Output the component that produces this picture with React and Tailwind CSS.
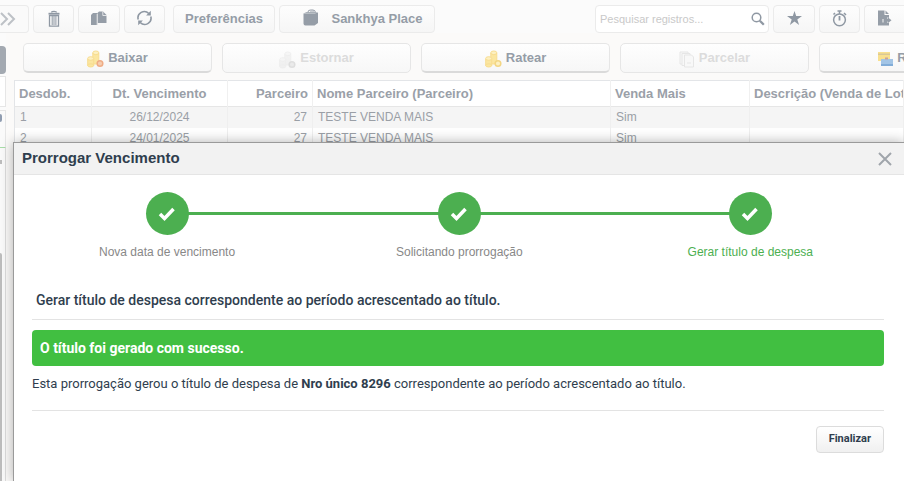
import React, { Fragment } from 'react';
import { clsx } from 'clsx';

const CoinsIcon = ({ muted, badge }) => (
  <svg width="17" height="18" viewBox="0 0 17 18" className={clsx('mt-[3px]', muted && 'grayscale opacity-40')}>
    <g fill="#fbe6a0" stroke="#f8dd90" strokeWidth="1">
      <path d="M5.800 3v11h6V3z" />
      <ellipse cx="8.800" cy="2.800" rx="3" ry="1.800" fill="#fdf0c2" />
      <path d="M.700 9v6.500h6V9z" />
      <ellipse cx="3.700" cy="8.500" rx="3" ry="1.800" fill="#fdf0c2" />
      <ellipse cx="3.700" cy="15.400" rx="3" ry="1.600" />
    </g>
    <circle cx="13" cy="13.500" r="2.800" fill={badge === 'gold' ? '#fdf0c2' : '#f6cdb0'} stroke={badge === 'gold' ? '#f3d684' : '#efac85'} strokeWidth="1.500" />
  </svg>
);

const SheetsIcon = () => (
  <svg width="16" height="17" viewBox="0 0 16 17" fill="#f8f8f8" stroke="#e6e6e6" className="mt-[3px]">
    <path d="M1 1h8v12H1z" />
    <path d="M3 2.500h8v12H3z" />
    <path d="M5.500 4h7l2 2v10h-9z" />
    <path d="M8 12h4" />
  </svg>
);

const CardsIcon = () => (
  <svg width="15" height="16" viewBox="0 0 15 16" className="mt-[2px]">
    <path fill="#f9e08e" d="M0 1h12v9H0z" />
    <path fill="#d9c896" d="M0 2.500h12v1.500H0z" />
    <path fill="#a3c5e6" d="M3 8h12v7H3z" />
    <path fill="#c9a39a" d="M7 6.500h3v2H7z" />
    <path fill="#82add8" d="M3 13h12v2H3z" />
  </svg>
);

const TrashIcon = () => (
  <svg width="12" height="17" viewBox="0 0 12 17" fill="none" stroke="#8f98a3">
    <path d="M3.500 2.500c0-1.500 5-1.500 5 0" strokeWidth="1.200" />
    <path d="M.500 3.700h11" strokeWidth="1.800" />
    <path d="M1.500 5.500v10.700h9V5.500z" strokeWidth="1.300" />
    <path d="M4.200 6v9M6 6v9M7.900 6v9" />
  </svg>
);

const CopyIcon = () => (
  <svg width="16" height="15" viewBox="0 0 16 15" fill="#959da7">
    <path d="M2 2h4.500v12H0V4z" />
    <path d="M8 .500h4L15.500 4v8H6.500V2z" />
    <path d="M6.200 3v11M11.800.500v4h4" fill="none" stroke="#f6f6f6" strokeWidth=".8" />
  </svg>
);

const RefreshIcon = () => (
  <svg width="15" height="16" viewBox="0 0 15 16" fill="none" stroke="#8f98a3" strokeWidth="1.600">
    <path d="M1.200 9.500A6.300 6.300 0 0 1 11.800 3.500M13.800 6.500A6.300 6.300 0 0 1 3.200 12.500" />
    <path d="M13.800.800v4.700H9.100zM1.200 15.200v-4.700h4.700z" fill="#8f98a3" stroke="none" />
  </svg>
);

const BagIcon = () => (
  <svg width="16" height="17" viewBox="0 0 16 17" className="mb-1">
    <path d="M5 4V3Q5 1 7.500 1H10q2.500 0 2.500 3M8 3.500V1.500M10 3.500V1.500" fill="none" stroke="#959da7" />
    <path d="M.500 4.500h11v12H2.500q-2 0-2-2zM11.500 4.500l3.500-1V14l-3.500 2.500z" fill="#959da7" />
    <path d="M.500 4.500 3.500 3H15l-3.500 1.500z" fill="#a8afb7" />
  </svg>
);

const SearchIcon = () => (
  <svg width="14" height="14" viewBox="0 0 14 14" fill="none" stroke="#8f98a3">
    <circle cx="5.500" cy="5.500" r="4.300" strokeWidth="1.500" />
    <path d="m8.800 8.800 4 4" strokeWidth="2.300" />
  </svg>
);

const StarIcon = () => (
  <svg width="15" height="14" viewBox="0 0 15 14" fill="#8f98a3">
    <path d="m7.500 0 1.700 5.100H15l-4.700 3.300 1.800 5.500-4.600-3.400-4.600 3.400 1.800-5.500L0 5.100h5.800z" />
  </svg>
);

const TimerIcon = () => (
  <svg width="15" height="17" viewBox="0 0 15 17" fill="none" stroke="#8f98a3">
    <circle cx="7.500" cy="9.800" r="5.900" strokeWidth="1.500" />
    <path d="M5.500 1h4M7.500 1v3M12 3l2 2M3 3 1.500 4.500" strokeWidth="1.500" />
    <path d="M7.500 6v4.500" strokeWidth="1.800" />
  </svg>
);

const ExportIcon = () => (
  <svg width="15" height="16" viewBox="0 0 15 16" fill="#959da7">
    <path d="M1 .500h6.500v4.500H12v3L10 7v6h2v2.500H1z" />
    <path d="M8.500.500 12 4H8.500zM10.500 7l4 3.200-4 3.200v-2H7V9h3.500z" />
    <path d="M6 9v3.500" stroke="#f5f5f5" />
  </svg>
);

const ToolButton = ({ label, className, children }) => (
  <button
    type="button"
    aria-label={label}
    className={clsx(
      'flex h-7 shrink-0 items-center justify-center rounded-sm border border-[#ebebeb] bg-linear-to-b from-[#fdfdfd] to-[#f6f6f6] text-[13px] font-bold text-[#959da7]',
      label && 'pb-[2px]',
      className
    )}
  >
    {children}
  </button>
);

const actions = [
  { label: 'Baixar', icon: <CoinsIcon /> },
  { label: 'Estornar', icon: <CoinsIcon muted />, disabled: true },
  { label: 'Ratear', icon: <CoinsIcon badge="gold" /> },
  { label: 'Parcelar', icon: <SheetsIcon />, disabled: true },
  { label: 'Receber', icon: <CardsIcon /> },
];

const rows = [
  { id: 1, date: '26/12/2024', partner: 27, name: 'TESTE VENDA MAIS', sale: 'Sim' },
  { id: 2, date: '24/01/2025', partner: 27, name: 'TESTE VENDA MAIS', sale: 'Sim' },
];

const steps = ['Nova data de vencimento', 'Solicitando prorrogação', 'Gerar título de despesa'];

const Toolbar = () => (
  <div className="flex gap-1 pt-[5px]">
    <button type="button" aria-label="Avançar" className="flex h-7 w-[29px] shrink-0 items-center rounded-r-sm border border-l-0 border-[#ebebeb] bg-[#fafafa]">
      <svg width="16" height="14" viewBox="0 0 16 14" fill="none" stroke="#bdc1c6" strokeWidth="2">
        <path d="m1 1 6 6-6 6M8 1l6 6-6 6" />
      </svg>
    </button>
    <ToolButton label="Excluir" className="w-[41px]"><TrashIcon /></ToolButton>
    <ToolButton label="Duplicar" className="w-[42px]"><CopyIcon /></ToolButton>
    <ToolButton label="Atualizar" className="w-[41px]"><RefreshIcon /></ToolButton>
    <ToolButton className="ml-1 w-[102px]">Preferências</ToolButton>
    <ToolButton className="w-[156px] gap-3 pl-3"><BagIcon />Sankhya Place</ToolButton>
    <label className="ml-auto flex h-7 w-[174px] shrink-0 items-center rounded-sm border border-[#ebebeb] bg-white pr-[3px] pl-1">
      <input
        type="text"
        aria-label="Pesquisar registros"
        placeholder="Pesquisar registros..."
        className="min-w-0 flex-1 text-[11px] outline-none placeholder:text-[#c9c9c9]"
      />
      <SearchIcon />
    </label>
    <ToolButton label="Favoritos" className="w-[42px]"><StarIcon /></ToolButton>
    <ToolButton label="Temporizador" className="w-[41px]"><TimerIcon /></ToolButton>
    <ToolButton label="Exportar" className="w-10 rounded-r-none border-r-0"><ExportIcon /></ToolButton>
  </div>
);

const SideStrip = () => (
  <div className="flex w-[6px] shrink-0 flex-col">
    <div className="mt-[13px] h-7 rounded-r-sm bg-[#a3a9b1]" />
    <div className="mt-[2px] h-[31px] border border-l-0 border-[#e6e6e6] bg-white" />
    <div className="mt-[3px] h-[38px] border border-l-0 border-[#e6e6e6] border-b-[#a8dda8] bg-[#fafafa] pt-[3px]">
      <div className="h-2 w-[2px] rounded-r-full bg-[#8f9cb0]" />
    </div>
    <div className="flex-1 border-r border-[#dcdcdc] bg-[#fafafa] pt-3">
      <div className="h-1 w-[2px] bg-[#bdbdbd]" />
      <div className="mt-[89px] h-full w-[2px] rounded-tr-sm bg-[#bdbdbd]" />
    </div>
  </div>
);

const TitlesTable = () => (
  <table className="w-full min-w-[890px] table-fixed border-collapse border border-[#e3e5e8] bg-white text-[12px] text-[#9a9fa6]">
    <colgroup>
      <col className="w-[77px]" />
      <col className="w-[136px]" />
      <col className="w-[85px]" />
      <col className="w-[298px]" />
      <col className="w-[139px]" />
      <col />
    </colgroup>
    <thead>
      <tr className="h-[26px] border-b border-[#e6e6e6] text-left text-[13px] text-[#9aa0a8] *:border-r *:border-[#f0f0f0] *:px-1 *:py-0 *:whitespace-nowrap">
        <th>Desdob.</th>
        <th className="text-center">Dt. Vencimento</th>
        <th className="text-right">Parceiro</th>
        <th>Nome Parceiro (Parceiro)</th>
        <th>Venda Mais</th>
        <th className="overflow-hidden">Descrição (Venda de Lote)</th>
      </tr>
    </thead>
    <tbody>
      {rows.map((row) => (
        <tr key={row.id} className="h-[21px] odd:bg-[#f5f5f5] *:border-r *:border-[#efefef] *:px-[5px] *:py-0">
          <td>{row.id}</td>
          <td className="text-center">{row.date}</td>
          <td className="text-right">{row.partner}</td>
          <td>{row.name}</td>
          <td>{row.sale}</td>
          <td />
        </tr>
      ))}
    </tbody>
  </table>
);

const Stepper = () => (
  <ol className="flex justify-between pr-[71px] pl-[67px]">
    {steps.map((step, i) => (
      <Fragment key={step}>
        {i > 0 && <li aria-hidden="true" className={clsx('mt-5 h-[3px] flex-1 bg-[#4caf50]', i === 1 ? '-mx-12' : '-mx-[46px]')} />}
        <li className={clsx('flex shrink-0 flex-col items-center text-[12px]', i === 2 ? 'text-[#4caf50]' : 'text-[#888888]')}>
          <span className="flex size-[43px] items-center justify-center rounded-full bg-[#4caf50]">
            <svg width="18" height="16" viewBox="0 0 18 16" fill="none" stroke="#fff" strokeWidth="3.500">
              <path d="m2 8 4.500 4.500L15.500 3" />
            </svg>
          </span>
          <span className="mt-2 leading-[18px]">{step}</span>
        </li>
      </Fragment>
    ))}
  </ol>
);

const ExtendDueDateModal = () => (
  <section
    role="dialog"
    aria-labelledby="modal-title"
    className="absolute top-[142px] right-0 bottom-0 left-[13px] border-t border-l border-[#9a9a9a] bg-white text-[#2f3e4e] shadow-[0_0_12px_rgba(0,0,0,0.3)]"
  >
    <header className="flex h-8 items-center justify-between border-b border-[#e5e5e5] bg-[#f2f2f2] pr-3 pl-2">
      <h2 id="modal-title" className="text-[15px] font-bold">Prorrogar Vencimento</h2>
      <button type="button" aria-label="Fechar">
        <svg width="14" height="14" viewBox="0 0 14 14" fill="none" stroke="#a0a5ab" strokeWidth="2">
          <path d="m1 1 12 12M13 1 1 13" />
        </svg>
      </button>
    </header>
    <div className="pt-[17px] pr-5 pl-[18px]">
      <Stepper />
      <div className="font-[Roboto,sans-serif]">
        <h3 className="mt-[29px] border-b border-[#e3e3e3] pb-[9px] pl-1 text-[14px] leading-5 font-medium">
          Gerar título de despesa correspondente ao período acrescentado ao título.
        </h3>
        <p className="mt-[10px] rounded-sm bg-[#41bf41] px-2 text-[14px] leading-9 font-bold text-white">
          O título foi gerado com sucesso.
        </p>
        <p className="mt-2 border-b border-[#e3e3e3] pb-4 text-[13px] leading-5">
          Esta prorrogação gerou o título de despesa de <b>Nro único 8296</b> correspondente ao período acrescentado ao título.
        </p>
        <div className="mt-[15px] flex justify-end">
          <button type="button" className="h-[27px] rounded-sm border border-[#dcdcdc] bg-linear-to-b from-white to-[#f0f0f0] px-3 text-[11px] font-bold">
            Finalizar
          </button>
        </div>
      </div>
    </div>
  </section>
);

export default function App() {
  return (
    <main className="relative flex h-screen flex-col overflow-hidden bg-[#fbfbfb] font-['Liberation_Sans',Arial,sans-serif]">
      <Toolbar />
      <div className="flex min-h-0 flex-1 overflow-hidden">
        <SideStrip />
        <div className="min-w-0 flex-1 bg-[#fbfaf9] pl-2">
          <div className="flex gap-[10px] pt-[10px] pb-[7px] pl-[9px]">
            {actions.map((action) => (
              <button
                key={action.label}
                type="button"
                disabled={action.disabled}
                className={clsx(
                  'flex h-[30px] w-[189px] shrink-0 items-center justify-center gap-1 rounded-[5px] border border-[#e6e6e6] bg-linear-to-b from-[#fefefe] to-[#f7f7f7] text-[13px] font-bold',
                  action.disabled ? 'text-[#dcdcdc]' : 'border-b-2 border-b-[#dadada] text-[#959da7]'
                )}
              >
                {action.icon}
                {action.label}
              </button>
            ))}
          </div>
          <TitlesTable />
        </div>
      </div>
      <ExtendDueDateModal />
    </main>
  );
}
